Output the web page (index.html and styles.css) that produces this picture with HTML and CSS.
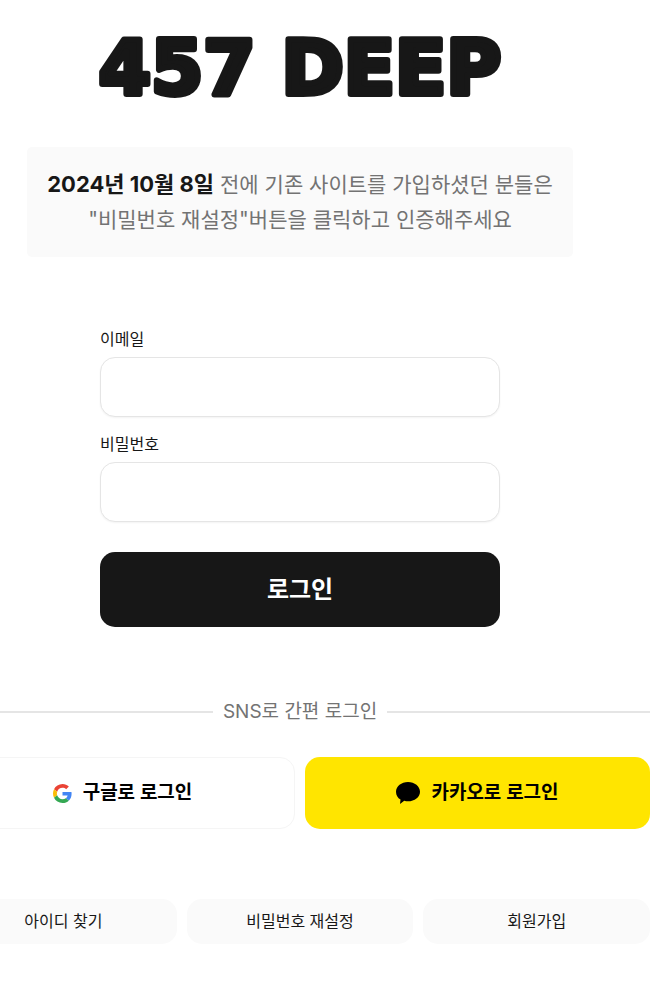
FILE: index.html
```html
<!DOCTYPE html>
<html lang="ko">
<head>
<meta charset="utf-8">
<meta name="viewport" content="width=device-width, initial-scale=1">
<title>457 DEEP</title>
<link rel="stylesheet" href="styles.css">
</head>
<body>
<main class="page">
  <h1 class="logo">
    <svg class="logo-art" viewBox="0 0 420 70">
      <text x="210" y="62" text-anchor="middle">457 DEEP</text>
    </svg>
  </h1>
  <p class="notice"><strong>2024년 10월 8일</strong> 전에 기존 사이트를 가입하셨던 분들은<br>"비밀번호 재설정"버튼을 클릭하고 인증해주세요</p>
  <form class="login">
    <label class="label" for="email">이메일</label>
    <input class="field" id="email" type="email">
    <label class="label" for="password">비밀번호</label>
    <input class="field" id="password" type="password">
    <button class="submit" type="submit">로그인</button>
  </form>
  <section class="wide">
    <div class="divider">SNS로 간편 로그인</div>
    <div class="social">
      <button class="sns google" type="button">
        <svg class="google-icon" viewBox="0 0 48 48" aria-hidden="true">
          <path fill="#EA4335" d="M24 9.500c3.540 0 6.710 1.220 9.210 3.600l6.850-6.850C35.900 2.380 30.470 0 24 0 14.620 0 6.510 5.380 2.560 13.220l7.980 6.190C12.430 13.720 17.740 9.500 24 9.500z"/>
          <path fill="#4285F4" d="M46.980 24.550c0-1.570-.15-3.090-.38-4.550H24v9.020h12.940c-.58 2.960-2.260 5.480-4.780 7.180l7.730 6c4.510-4.180 7.090-10.360 7.090-17.650z"/>
          <path fill="#FBBC05" d="M10.530 28.590c-.48-1.450-.76-2.990-.76-4.590s.27-3.140.76-4.590l-7.980-6.190C.92 16.460 0 20.120 0 24c0 3.880.92 7.540 2.560 10.780l7.970-6.190z"/>
          <path fill="#34A853" d="M24 48c6.480 0 11.930-2.130 15.890-5.810l-7.730-6c-2.150 1.450-4.920 2.300-8.160 2.300-6.260 0-11.570-4.220-13.470-9.910l-7.980 6.190C6.510 42.620 14.620 48 24 48z"/>
        </svg>
        <span>구글로 로그인</span>
      </button>
      <button class="sns kakao" type="button">
        <svg class="kakao-icon" viewBox="0 0 24 22" aria-hidden="true">
          <path d="M12 0C5.400 0 0 4.300 0 9.700c0 3.500 1.700 6.200 4.500 7.900L4 22l4.200-3.200c1.200.4 2.500.5 3.800.5 6.600 0 12-4.200 12-9.600S18.600 0 12 0z"/>
        </svg>
        <span>카카오로 로그인</span>
      </button>
    </div>
    <nav class="links">
      <a href="#find-id">아이디 찾기</a>
      <a href="#reset-password">비밀번호 재설정</a>
      <a href="#join">회원가입</a>
    </nav>
  </section>
</main>
</body>
</html>
```
FILE: styles.css
```css
* {
  box-sizing: border-box;
}

body {
  margin: 0;
  overflow-x: hidden;
  background: #fff;
  color: #171717;
  font: 16px/24px Inter, "Noto Sans CJK KR", sans-serif;
}

button,
input {
  font: inherit;
}

.page {
  display: flex;
  flex-direction: column;
  align-items: center;
  margin-right: 56px;
  padding: 32px 0;
}

.logo {
  margin: 0 0 45px;
}

.logo-art {
  display: block;
  width: 420px;
  height: 70px;
  overflow: visible;
  fill: #171717;
  stroke: #171717;
  stroke-width: 6px;
  stroke-linejoin: round;
  font: 700 75px "DejaVu Sans", sans-serif;
}

.notice {
  margin: 0 0 70px;
  padding: 20px;
  border-radius: 5px;
  background: #fafafa;
  color: #737373;
  font-size: 21px;
  line-height: 35px;
  text-align: center;
  white-space: nowrap;
}

.notice strong {
  color: #171717;
  font-size: 22px;
  font-weight: 700;
}

.login {
  display: flex;
  flex-direction: column;
  width: 100%;
  max-width: 400px;
}

.label {
  margin-bottom: 6px;
}

.field {
  height: 60px;
  margin-bottom: 15px;
  padding: 0 16px;
  border: 1px solid #e5e5e5;
  border-radius: 15px;
  background: #fff;
  box-shadow: 0 1px 2px rgba(0, 0, 0, 0.05);
}

.submit {
  height: 75px;
  margin-top: 15px;
  border: 0;
  border-radius: 15px;
  background: #171717;
  color: #fff;
  font-size: 24px;
  font-weight: 700;
}

.wide {
  align-self: stretch;
  margin: 70px -50px 0;
}

.divider {
  display: flex;
  align-items: center;
  gap: 10px;
  color: #737373;
  font-size: 19px;
  line-height: 30px;
}

.divider::before,
.divider::after {
  content: "";
  flex: 1;
  height: 2px;
  background: #e5e5e5;
}

.social {
  display: grid;
  grid-template-columns: 1fr 1fr;
  gap: 10px;
  margin: 30px 0 70px;
}

.sns {
  display: flex;
  align-items: center;
  justify-content: center;
  gap: 11px;
  height: 72px;
  border: 0;
  border-radius: 15px;
  color: #000;
  font-size: 19px;
  font-weight: 600;
  line-height: 26px;
}

.google {
  border: 1px solid #f5f5f5;
  background: #fff;
}

.kakao {
  background: #ffe500;
}

.google-icon {
  width: 19px;
  height: 19px;
}

.kakao-icon {
  width: 24px;
  height: 22px;
}

.links {
  display: grid;
  grid-template-columns: repeat(3, 1fr);
  gap: 10px;
}

.links a {
  border-radius: 15px;
  background: #fafafa;
  color: #171717;
  line-height: 45px;
  text-align: center;
  text-decoration: none;
}
```
